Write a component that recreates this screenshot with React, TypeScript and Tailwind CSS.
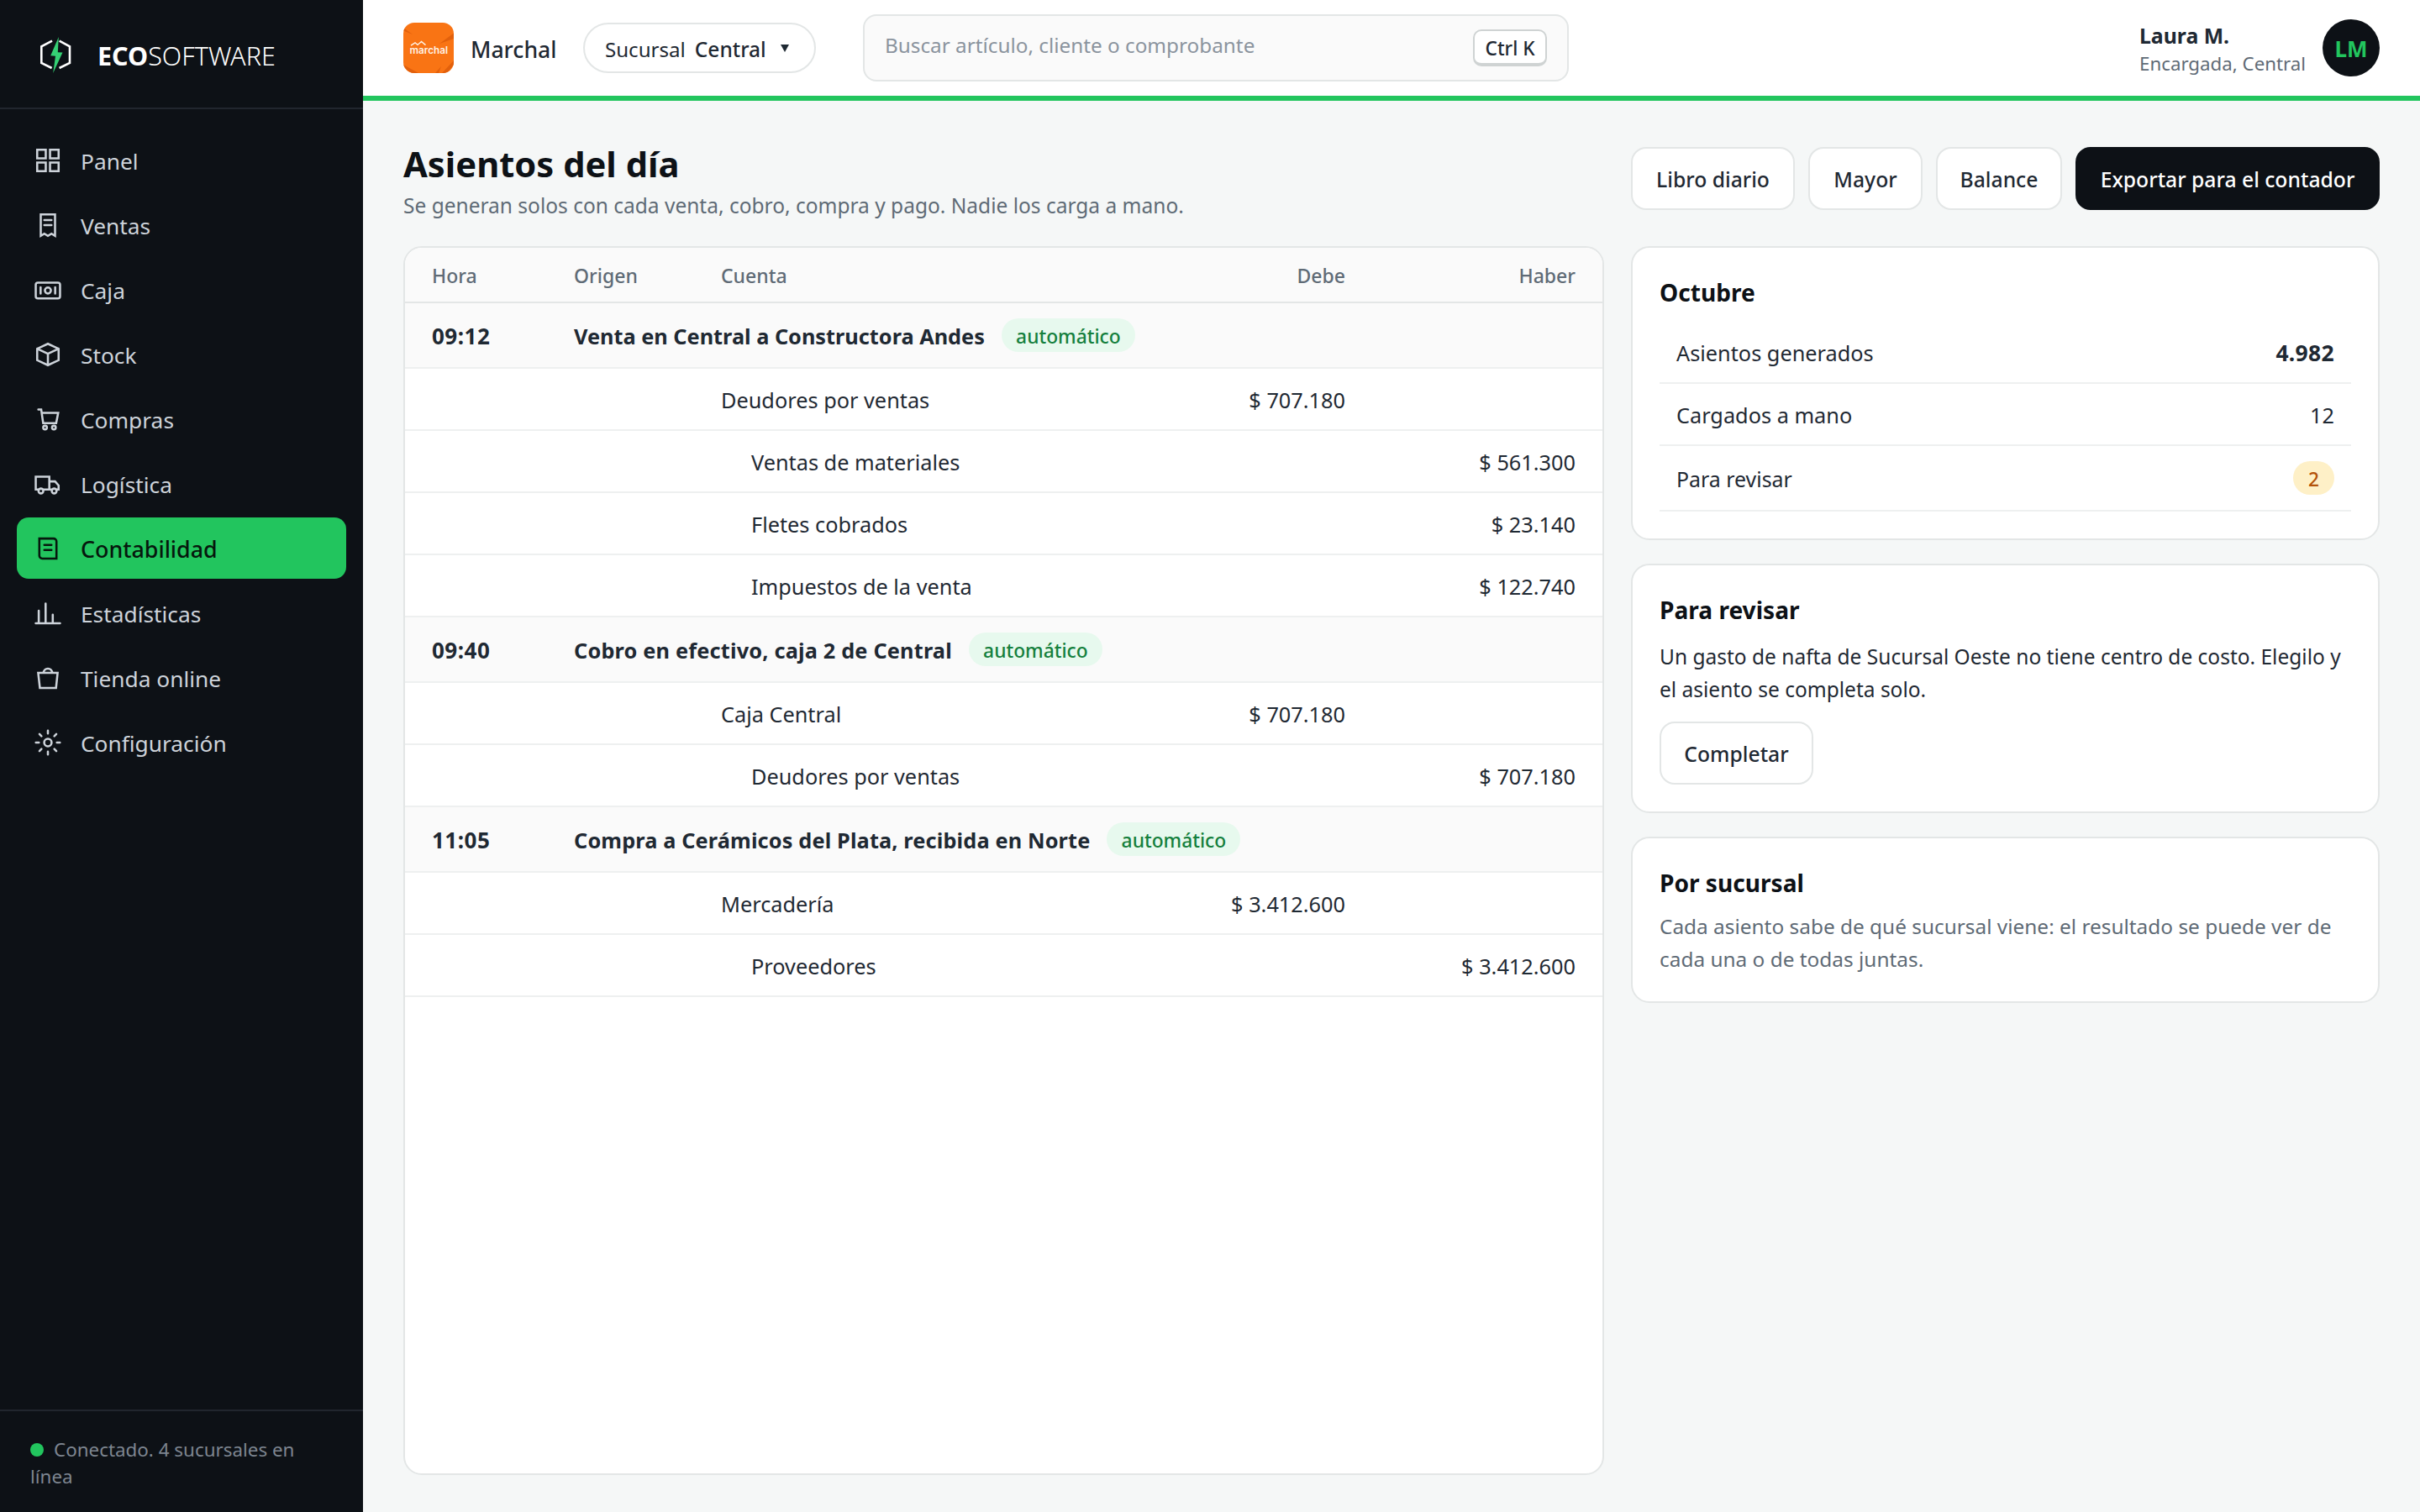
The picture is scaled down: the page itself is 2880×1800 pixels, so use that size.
import React from "react";

type IconName =
  | "panel" | "ventas" | "caja" | "stock" | "compras"
  | "logistica" | "contabilidad" | "estadisticas" | "tienda" | "config";

const ICONS: Record<IconName, React.ReactNode> = {
  panel: <path d="M2.5 2.5h6v6h-6zM11.5 2.5h6v6h-6zM2.5 11.5h6v6h-6zM11.5 11.5h6v6h-6z" />,
  ventas: <path d="M5 2.5h10v15L12.5 16 10 17.5 7.5 16 5 17.5zM7.5 6.5h5M7.5 10h5" />,
  caja: (
    <>
      <rect x="1.5" y="5" width="17" height="11" rx="1.5" />
      <circle cx="10" cy="10.5" r="2.1" />
      <path d="M4.9 8.3v4.4M15.1 8.3v4.4" />
    </>
  ),
  stock: <path d="M10 2.5L17.5 6v8L10 17.5 2.5 14V6zM2.5 6L10 9.5 17.5 6M10 9.5v8" />,
  compras: (
    <>
      <path d="M3.3 3.2h2L6.7 12.8h9.1l1.4-7.2H5.7" />
      <circle cx="8" cy="15.9" r="1.3" />
      <circle cx="14.2" cy="15.9" r="1.3" />
    </>
  ),
  logistica: (
    <>
      <path d="M3.4 14H1.5V5H11v9H6.8M11 8.3h4l2.5 2.8V14h-1.3M12.6 14H11" />
      <circle cx="5.1" cy="15" r="1.7" />
      <circle cx="14.4" cy="15" r="1.7" />
    </>
  ),
  contabilidad: <path d="M4 3h10a2 2 0 0 1 2 2v12H6a2 2 0 0 1-2-2zM7.5 7.5h5M7.5 11h5" />,
  estadisticas: <path d="M1.5 17h17M3.6 17V8.3M8.4 17V3.2M13.4 17v-5.9" />,
  tienda: <path d="M3.2 6.5h13.6L15.7 17H4.4zM7 6.5a3 3 0 0 1 6 0" />,
  config: (
    <>
      <circle cx="10" cy="10" r="2.6" />
      <path d="M10 1.6v2.1M10 16.3v2.1M1.6 10h2.1M16.3 10h2.1M4.1 4.1l1.4 1.4M14.5 14.5l1.4 1.4M4.1 15.9l1.4-1.4M14.5 5.5l1.4-1.4" />
    </>
  ),
};

const NAV: { icon: IconName; label: string; active?: boolean }[] = [
  { icon: "panel", label: "Panel" },
  { icon: "ventas", label: "Ventas" },
  { icon: "caja", label: "Caja" },
  { icon: "stock", label: "Stock" },
  { icon: "compras", label: "Compras" },
  { icon: "logistica", label: "Logística" },
  { icon: "contabilidad", label: "Contabilidad", active: true },
  { icon: "estadisticas", label: "Estadísticas" },
  { icon: "tienda", label: "Tienda online" },
  { icon: "config", label: "Configuración" },
];

type Line = { account: string; debit?: string; credit?: string };

const ENTRIES: { time: string; title: string; tracking: string; lines: Line[] }[] = [
  {
    time: "09:12",
    title: "Venta en Central a Constructora Andes",
    tracking: "tracking-normal",
    lines: [
      { account: "Deudores por ventas", debit: "$ 707.180" },
      { account: "Ventas de materiales", credit: "$ 561.300" },
      { account: "Fletes cobrados", credit: "$ 23.140" },
      { account: "Impuestos de la venta", credit: "$ 122.740" },
    ],
  },
  {
    time: "09:40",
    title: "Cobro en efectivo, caja 2 de Central",
    tracking: "tracking-[0.18px]",
    lines: [
      { account: "Caja Central", debit: "$ 707.180" },
      { account: "Deudores por ventas", credit: "$ 707.180" },
    ],
  },
  {
    time: "11:05",
    title: "Compra a Cerámicos del Plata, recibida en Norte",
    tracking: "tracking-[0.14px]",
    lines: [
      { account: "Mercadería", debit: "$ 3.412.600" },
      { account: "Proveedores", credit: "$ 3.412.600" },
    ],
  },
];

const COLS = "grid grid-cols-[169px_175px_500px_307px_274px]";

function Sidebar() {
  return (
    <aside className="flex w-[432px] shrink-0 flex-col bg-[#0d1116]">
      <div className="flex h-[130px] items-center border-b-2 border-[#21262e] pl-11">
        <svg viewBox="44 38 44 52" className="h-[52px] w-11" fill="none">
          <path d="M62 48.7L49.3 55.3V75L61.6 81M70.6 48.7L83 55.3V75L70.6 81" stroke="#fff" strokeWidth="2.6" />
          <path d="M69.8 44L60.2 66.2 66 66.8 63.2 87 74.5 62.6 68.8 62.2z" fill="#35d074" />
        </svg>
        <span className="pl-[28px] pt-1 text-[30.5px] leading-10 text-white">
          <span className="font-bold">ECO</span>
          <span className="font-light">SOFTWARE</span>
        </span>
      </div>
      <nav className="flex flex-1 flex-col gap-1 px-5 pt-6">
        {NAV.map((n) => (
          <a
            key={n.label}
            className={
              n.active
                ? "flex h-[73px] items-center gap-[22px] rounded-[14px] bg-[#22c55e] pl-5 font-medium text-[#06170d]"
                : "flex h-[73px] items-center gap-[22px] rounded-[14px] pl-5 text-[#cdd3da]"
            }
          >
            <svg
              viewBox="0 0 20 20"
              className="size-[34px]"
              fill="none"
              stroke="currentColor"
              strokeWidth="1.5"
              strokeLinecap="round"
            >
              {ICONS[n.icon]}
            </svg>
            <span className={n.active ? "pt-[3px] text-[26.8px] leading-9" : "pt-[3px] text-[26.3px] leading-9"}>
              {n.label}
            </span>
          </a>
        ))}
      </nav>
      <div className="h-[122px] border-t-2 border-[#21262e] px-9 pt-[30px] text-[22.4px] leading-8 text-[#7d8590]">
        <span className="mr-[12px] inline-block size-4 rounded-full bg-[#22c55e]" />
        Conectado. 4 sucursales en
        <br />
        línea
      </div>
    </aside>
  );
}

function BrandTile() {
  return (
    <svg viewBox="0 0 60 60" className="size-[60px] rounded-[13px]">
      <rect width="60" height="60" fill="#f97414" />
      <path d="M43 25L60 12.5V19zM0 6l11 8L0 9.5zM0 50l18 10H9L0 53zM38 60l7-8-3 8zM46 60l14-15v5L52 60z" fill="#e2600c" />
      <path d="M9 27.2l5-3.4 3 2.6 4.5-4 5 4.2" fill="none" stroke="#fff3e6" strokeWidth="1.4" />
      <text
        x="7.5"
        y="37.2"
        textLength="45.5"
        lengthAdjust="spacingAndGlyphs"
        fill="#fff3e6"
        fontFamily="Inter, sans-serif"
        fontWeight="600"
        fontSize="11.5"
      >
        marchal
      </text>
    </svg>
  );
}

function TopBar() {
  return (
    <header className="flex h-[120px] shrink-0 items-center border-b-[6px] border-[#22c55e] bg-white px-12">
      <BrandTile />
      <span className="w-[154px] pl-5 pt-[3px] text-[26.6px] font-medium leading-9 text-[#1f2933]">Marchal</span>
      <div className="flex h-[60px] w-[277px] items-center rounded-full border-2 border-[#e3e6e6] pl-6 text-[24.1px] leading-8 text-[#1f2933]">
        <span className="pt-[3px]">Sucursal</span>
        <span className="w-[103px] pl-[11px] pt-[3px] text-[24.5px] font-medium">Central</span>
        <svg viewBox="0 0 10 9" className="ml-[10px] h-[9px] w-[10px]">
          <path d="M0 0h10L5 9z" fill="#1f2933" />
        </svg>
      </div>
      <div className="ml-[56px] flex h-20 w-[840px] items-center justify-between rounded-[16px] border-2 border-[#e3e6e6] bg-[#fafafa] pl-6 pr-[24px]">
        <span className="pb-[7px] text-[24.3px] leading-8 text-[#8b949e]">Buscar artículo, cliente o comprobante</span>
        <span className="flex h-11 w-[88px] items-center justify-center rounded-[10px] border-2 border-b-4 border-[#cfd3d3] bg-white pt-[3px] text-[22.7px] font-medium leading-8 text-[#1f2933]">
          Ctrl K
        </span>
      </div>
      <div className="ml-auto flex items-center">
        <div className="w-[218px] pt-1 leading-[34px]">
          <div className="text-[24.8px] font-bold text-[#1f2933]">Laura M.</div>
          <div className="text-[22.3px] text-[#5f6b76]">Encargada, Central</div>
        </div>
        <div className="flex size-[68px] items-center justify-center rounded-full bg-[#0d1116] pt-[3px] text-[26px] font-bold text-[#22c55e]">
          LM
        </div>
      </div>
    </header>
  );
}

function Button({ children, className }: { children: React.ReactNode; className: string }) {
  return (
    <button
      className={`flex h-[75px] items-center justify-center rounded-[18px] border-2 pt-[3px] text-[24.7px] font-medium ${className}`}
    >
      {children}
    </button>
  );
}

const LIGHT = "border-[#e3e6e6] bg-white text-[#1f2933]";

function Ledger() {
  return (
    <section className="overflow-hidden rounded-[22px] border-2 border-[#e3e6e6] bg-white">
      <div className={`${COLS} h-[66px] items-center border-b-2 border-[#e3e6e6] bg-[#fafafa] pt-[3px] text-[23px] font-medium text-[#5f6b76]`}>
        <span className="px-8">Hora</span>
        <span className="px-8">Origen</span>
        <span className="px-8">Cuenta</span>
        <span className="px-8 text-right">Debe</span>
        <span className="px-8 text-right">Haber</span>
      </div>
      {ENTRIES.map((e) => (
        <React.Fragment key={e.time}>
          <div className="grid h-[78px] grid-cols-[169px_1fr] items-center border-b-2 border-[#eef0f0] bg-[#fafafa] font-bold text-[#1f2933]">
            <span className="px-8 pt-px text-[26px] leading-9 tracking-[0.5px]">{e.time}</span>
            <div className="flex items-center px-8">
              <span className={`pt-px text-[25.3px] leading-9 ${e.tracking}`}>{e.title}</span>
              <span className="ml-5 flex h-10 w-[159px] items-center justify-center rounded-full bg-[#e7f9ee] pt-[4px] text-[22.8px] font-medium text-[#15803d]">
                automático
              </span>
            </div>
          </div>
          {e.lines.map((l) => (
            <div
              key={l.account}
              className={`${COLS} h-[74px] items-center border-b-2 border-[#eef0f0] pt-[4px] text-[25.3px] text-[#1f2933]`}
            >
              <span className={l.credit ? "col-start-3 pl-[68px]" : "col-start-3 pl-8"}>{l.account}</span>
              <span className="px-8 text-right">{l.debit}</span>
              <span className="px-8 text-right">{l.credit}</span>
            </div>
          ))}
        </React.Fragment>
      ))}
    </section>
  );
}

function Card({ title, className, children }: { title: string; className: string; children: React.ReactNode }) {
  return (
    <section className={`rounded-[22px] border-2 border-[#e3e6e6] bg-white px-8 pt-[33px] ${className}`}>
      <h2 className="text-[28.1px] font-bold leading-10 text-[#0d1116]">{title}</h2>
      {children}
    </section>
  );
}

export default function App() {
  return (
    <div className="flex h-[1800px] w-[2880px] overflow-hidden bg-[#f5f7f7] [font-family:'Noto_Sans',sans-serif]">
      <Sidebar />
      <div className="flex min-w-0 flex-1 flex-col">
        <TopBar />
        <main className="flex flex-1 flex-col px-12 pb-11 pt-12">
          <div className="mb-[30px] flex h-[95px] justify-between">
            <div className="pt-px">
              <h1 className="text-[41.7px] font-bold leading-[52px] text-[#0d1116]">Asientos del día</h1>
              <p className="mt-[5px] text-[24.5px] leading-[38px] text-[#5f6b76]">
                Se generan solos con cada venta, cobro, compra y pago. Nadie los carga a mano.
              </p>
            </div>
            <div className="mt-[7px] flex gap-4">
              <Button className={`w-[195px] ${LIGHT}`}>Libro diario</Button>
              <Button className={`w-[136px] ${LIGHT}`}>Mayor</Button>
              <Button className={`w-[150px] ${LIGHT}`}>Balance</Button>
              <Button className="w-[362px] border-[#0d1116] bg-[#0d1116] text-white">Exportar para el contador</Button>
            </div>
          </div>
          <div className="grid flex-1 grid-cols-[1429px_891px] gap-8">
            <Ledger />
            <div className="flex flex-col gap-7">
              <Card title="Octubre" className="h-[350px]">
                <div className="mt-[15px] text-[25.3px] text-[#1f2933]">
                  <div className="flex h-[74px] items-center justify-between border-b-2 border-[#eef0f0] px-5 pt-[4px]">
                    <span>Asientos generados</span>
                    <span className="text-[26.5px] font-bold tracking-[0.3px]">4.982</span>
                  </div>
                  <div className="flex h-[74px] items-center justify-between border-b-2 border-[#eef0f0] px-5 pt-[4px]">
                    <span>Cargados a mano</span>
                    <span>12</span>
                  </div>
                  <div className="flex h-[78px] items-center justify-between border-b-2 border-[#eef0f0] px-5">
                    <span className="pt-[4px] text-[24.9px]">Para revisar</span>
                    <span className="flex h-10 w-[49px] items-center justify-center rounded-full bg-[#fef0c7] pt-[4px] text-[22.7px] font-medium text-[#b45309]">
                      2
                    </span>
                  </div>
                </div>
              </Card>
              <Card title="Para revisar" className="h-[297px]">
                <p className="mb-[19px] mt-[16px] text-[24.5px] leading-[39px] text-[#1f2933]">
                  Un gasto de nafta de Sucursal Oeste no tiene centro de costo. Elegilo y<br />
                  el asiento se completa solo.
                </p>
                <Button className={`w-[183px] ${LIGHT}`}>Completar</Button>
              </Card>
              <Card title="Por sucursal" className="h-[198px]">
                <p className="mt-[12px] text-[24.4px] leading-[39px] text-[#5f6b76]">
                  Cada asiento sabe de qué sucursal viene: el resultado se puede ver de
                  <br />
                  cada una o de todas juntas.
                </p>
              </Card>
            </div>
          </div>
        </main>
      </div>
    </div>
  );
}
